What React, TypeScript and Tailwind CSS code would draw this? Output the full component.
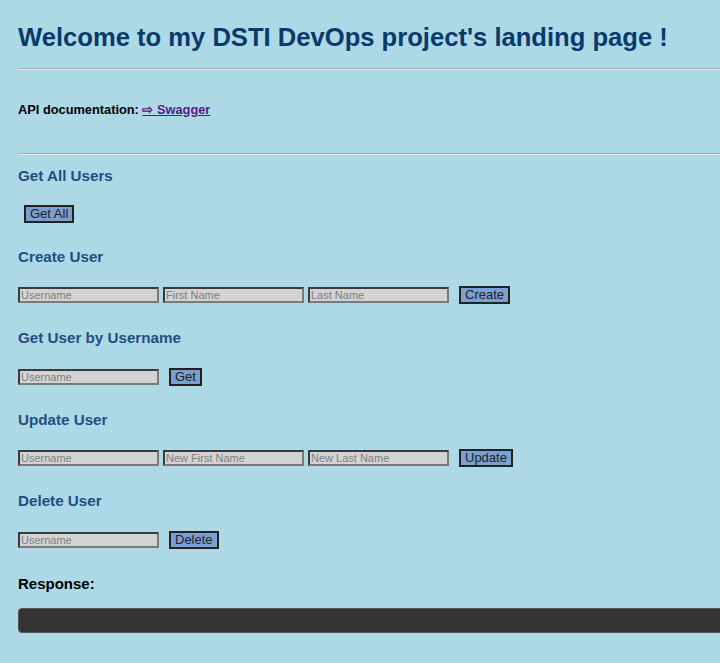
import React from 'react';

const Field: React.FC<{ placeholder: string }> = ({ placeholder }) => (
  <input
    type="text"
    placeholder={placeholder}
    className="h-[16px] w-[141px] border-2 border-t-[#3a3a3a] border-l-[#3a3a3a] border-b-[#7a7a7a] border-r-[#7a7a7a] bg-[#d3d3d3] px-[1px] text-[11px] leading-[12px] text-[#222] outline-none placeholder:text-[#808080]"
  />
);

const Btn: React.FC<{ label: string }> = ({ label }) => (
  <button className="ml-[6px] h-[18px] border-2 border-[#222] bg-[#7b9fcf] px-[4px] text-[13px] leading-[14px] text-[#222]">
    {label}
  </button>
);

const Section: React.FC<{ title: string; children: React.ReactNode; top: string; gap: string }> = ({
  title,
  children,
  top,
  gap,
}) => (
  <div className={top}>
    <h3 className="h-[18px] text-[15.2px] font-bold leading-[18px] text-[#1f4f82]">{title}</h3>
    <div className={`${gap} flex h-[18px] items-center gap-[4px]`}>{children}</div>
  </div>
);

const Hr: React.FC = () => (
  <div className="h-[2px] w-full border-t border-t-[#a9a9a9] border-b border-b-[#e6eef0]" />
);

export default function App() {
  return (
    <div className="min-h-[663px] w-full overflow-hidden bg-[#add8e6] font-['Liberation_Sans',Arial,sans-serif]">
      <div className="w-[760px] pl-[18px] pt-[22px] pb-[30px]">
        <h1 className="text-[25.6px] font-bold leading-[30px] text-[#0a3a6b]">
          Welcome to my DSTI DevOps project's landing page !
        </h1>
        <div className="mt-[16px]">
          <Hr />
        </div>
        <p className="mt-[32px] text-[12.8px] font-bold leading-[16px] text-black">
          API documentation:{' '}
          <a href="#" className="text-[#551a8b] underline">
            ⇨ Swagger
          </a>
        </p>
        <div className="mt-[35px]">
          <Hr />
        </div>

        <Section title="Get All Users" top="mt-[12px]" gap="mt-[20px]">
          <Btn label="Get All" />
        </Section>

        <Section title="Create User" top="mt-[25px]" gap="mt-[20px]">
          <Field placeholder="Username" />
          <Field placeholder="First Name" />
          <Field placeholder="Last Name" />
          <Btn label="Create" />
        </Section>

        <Section title="Get User by Username" top="mt-[25px]" gap="mt-[21px]">
          <Field placeholder="Username" />
          <Btn label="Get" />
        </Section>

        <Section title="Update User" top="mt-[25px]" gap="mt-[20px]">
          <Field placeholder="Username" />
          <Field placeholder="New First Name" />
          <Field placeholder="New Last Name" />
          <Btn label="Update" />
        </Section>

        <Section title="Delete User" top="mt-[25px]" gap="mt-[21px]">
          <Field placeholder="Username" />
          <Btn label="Delete" />
        </Section>

        <h4 className="mt-[26px] h-[18px] text-[15px] font-bold leading-[18px] text-black">Response:</h4>
        <div className="mt-[15px] h-[25px] rounded-[4px] border border-[#555] bg-[#333]" />
      </div>
    </div>
  );
}
